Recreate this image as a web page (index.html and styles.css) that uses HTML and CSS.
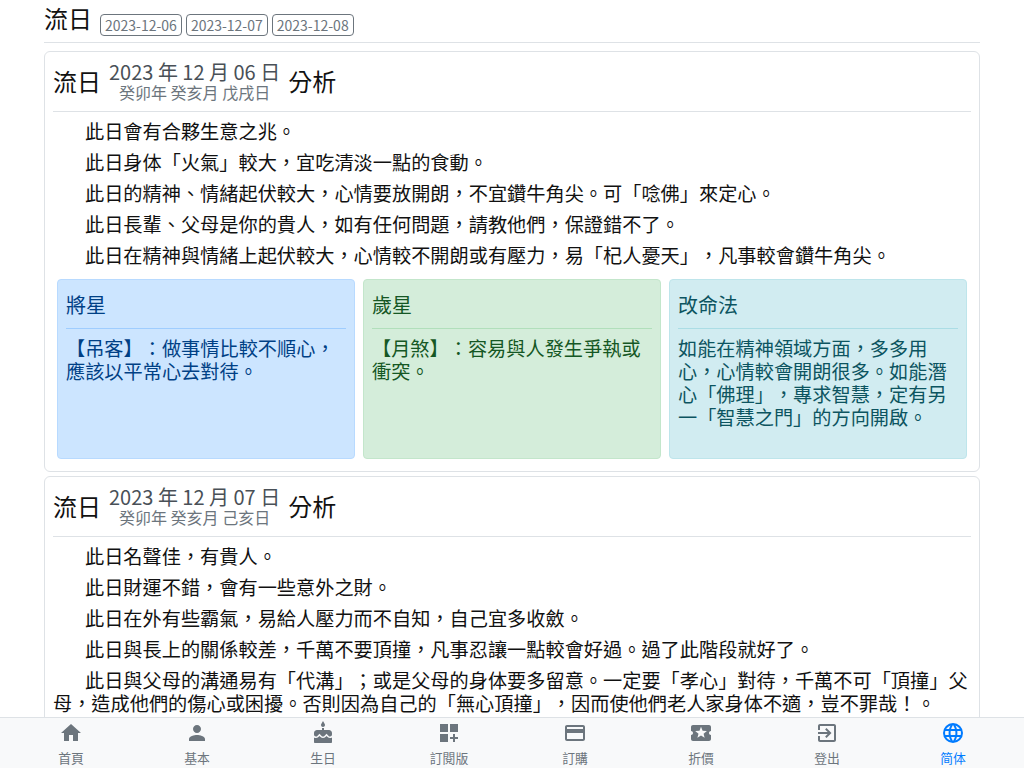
FILE: index.html
```html
<!DOCTYPE html>
<html lang="zh-Hant">
<head>
    <title>流日</title>
    <link rel="stylesheet" href="styles.css">
</head>
<body>
    <div class="top-row">
        <span class="top-title">流日</span>
        <span class="date-btn">2023-12-06</span>
        <span class="date-btn">2023-12-07</span>
        <span class="date-btn">2023-12-08</span>
    </div>
    <div class="day-card">
        <div class="day-head">
            <span class="head-word">流日</span>
            <div class="head-date"><div class="date-main">2023 年 12 月 06 日</div><div class="date-sub">癸卯年 癸亥月 戊戌日</div></div>
            <span class="head-word">分析</span>
        </div>
        <p>此日會有合夥生意之兆。</p>
        <p>此日身体「火氣」較大，宜吃清淡一點的食動。</p>
        <p>此日的精神、情緒起伏較大，心情要放開朗，不宜鑽牛角尖。可「唸佛」來定心。</p>
        <p>此日長輩、父母是你的貴人，如有任何問題，請教他們，保證錯不了。</p>
        <p>此日在精神與情緒上起伏較大，心情較不開朗或有壓力，易「杞人憂天」，凡事較會鑽牛角尖。</p>
        <div class="note-row">
            <div class="note note-blue"><div class="note-title">將星</div><div class="note-text">【吊客】：做事情比較不順心，應該以平常心去對待。</div></div>
            <div class="note note-green"><div class="note-title">歲星</div><div class="note-text">【月煞】：容易與人發生爭執或衝突。</div></div>
            <div class="note note-cyan"><div class="note-title">改命法</div><div class="note-text">如能在精神領域方面，多多用心，心情較會開朗很多。如能潛心「佛理」，專求智慧，定有另一「智慧之門」的方向開啟。</div></div>
        </div>
    </div>
    <div class="day-card">
        <div class="day-head">
            <span class="head-word">流日</span>
            <div class="head-date"><div class="date-main">2023 年 12 月 07 日</div><div class="date-sub">癸卯年 癸亥月 己亥日</div></div>
            <span class="head-word">分析</span>
        </div>
        <p>此日名聲佳，有貴人。</p>
        <p>此日財運不錯，會有一些意外之財。</p>
        <p>此日在外有些霸氣，易給人壓力而不自知，自己宜多收斂。</p>
        <p>此日與長上的關係較差，千萬不要頂撞，凡事忍讓一點較會好過。過了此階段就好了。</p>
        <p>此日與父母的溝通易有「代溝」；或是父母的身体要多留意。一定要「孝心」對待，千萬不可「頂撞」父母，造成他們的傷心或困擾。否則因為自己的「無心頂撞」，因而使他們老人家身体不適，豈不罪哉！。</p>
    </div>
    <div class="bottom-nav">
        <div class="nav-item"><svg viewBox="0 0 24 24"><path d="M10 20v-6h4v6h5v-8h3L12 3 2 12h3v8z"/></svg><span>首頁</span></div>
        <div class="nav-item"><svg viewBox="0 0 24 24"><path d="M12 12c2.200 0 4-1.800 4-4s-1.800-4-4-4-4 1.800-4 4 1.800 4 4 4zm0 2c-2.700 0-8 1.300-8 4v2h16v-2c0-2.700-5.300-4-8-4z"/></svg><span>基本</span></div>
        <div class="nav-item"><svg viewBox="0 0 24 24"><path d="M12 6c1.110 0 2-.9 2-2 0-.38-.1-.73-.29-1.030L12 0l-1.710 2.970c-.19.3-.29.65-.29 1.030 0 1.100.9 2 2 2zm4.600 9.990l-1.070-1.070-1.080 1.070c-1.300 1.300-3.580 1.310-4.890 0l-1.070-1.070-1.090 1.070C6.750 16.640 5.880 17 4.960 17c-.73 0-1.400-.23-1.960-.61V21c0 .55.45 1 1 1h16c.55 0 1-.45 1-1v-4.610c-.56.38-1.230.61-1.960.61-.92 0-1.790-.36-2.440-1.010zM18 9h-5V7h-2v2H6c-1.660 0-3 1.340-3 3v1.540c0 1.080.88 1.960 1.960 1.960.52 0 1.020-.2 1.380-.57l2.140-2.130 2.130 2.130c.74.74 2.030.74 2.770 0l2.140-2.130 2.130 2.130c.37.37.86.57 1.380.57 1.080 0 1.960-.88 1.960-1.960V12C21 10.340 19.660 9 18 9z"/></svg><span>生日</span></div>
        <div class="nav-item"><svg viewBox="0 0 24 24"><path d="M3 3h8v8H3zM13 3h8v8h-8zM3 13h8v8H3zM16 13h2v3h3v2h-3v3h-2v-3h-3v-2h3z"/></svg><span>訂閱版</span></div>
        <div class="nav-item"><svg viewBox="0 0 24 24"><path d="M20 4H4c-1.100 0-2 .9-2 2v12c0 1.100.9 2 2 2h16c1.100 0 2-.9 2-2V6c0-1.100-.9-2-2-2zm0 14H4v-6h16v6zm0-10H4V6h16v2z"/></svg><span>訂購</span></div>
        <div class="nav-item"><svg viewBox="0 0 24 24"><path d="M22 10V6c0-1.100-.9-2-2-2H4c-1.100 0-2 .9-2 2v4c1.100 0 2 .9 2 2s-.9 2-2 2v4c0 1.100.9 2 2 2h16c1.100 0 2-.9 2-2v-4c-1.100 0-2-.9-2-2s.9-2 2-2zm-6.400 6.800L12 14.500l-3.600 2.300 1.100-4.100-3.300-2.700 4.300-.3L12 5.800l1.600 3.900 4.300.3-3.300 2.700z"/></svg><span>折價</span></div>
        <div class="nav-item"><svg viewBox="0 0 24 24"><path d="M10.100 15.600 11.500 17l5-5-5-5-1.400 1.400 2.600 2.600H3v2h9.700zM19 3H5c-1.100 0-2 .9-2 2v4h2V5h14v14H5v-4H3v4c0 1.100.9 2 2 2h14c1.100 0 2-.9 2-2V5c0-1.100-.9-2-2-2z"/></svg><span>登出</span></div>
        <div class="nav-item nav-active"><svg viewBox="0 0 24 24"><path d="M12 2a10 10 0 1 0 0 20 10 10 0 0 0 0-20zm6.900 6h-3a15.600 15.600 0 0 0-1.400-3.600A8 8 0 0 1 18.900 8zM12 4c.8 1.200 1.500 2.500 1.900 4h-3.800c.4-1.500 1.100-2.800 1.900-4zM4.300 14a8 8 0 0 1 0-4h3.400a16.500 16.500 0 0 0 0 4zm.8 2h3c.3 1.300.8 2.500 1.400 3.600A8 8 0 0 1 5.100 16zm3-8h-3a8 8 0 0 1 4.400-3.600C8.900 5.500 8.400 6.700 8.100 8zM12 20c-.8-1.200-1.500-2.500-1.900-4h3.800c-.4 1.500-1.100 2.800-1.900 4zm2.300-6H9.700a14.700 14.700 0 0 1 0-4h4.600a14.700 14.700 0 0 1 0 4zm.2 5.600c.6-1.100 1.100-2.300 1.400-3.600h3a8 8 0 0 1-4.400 3.600zm1.800-5.600a16.500 16.500 0 0 0 0-4h3.400a8 8 0 0 1 0 4z"/></svg><span>简体</span></div>
    </div>
</body>
</html>
```

FILE: styles.css
```css
html, body {
    height: 768px;
    overflow: hidden;
}
body {
    margin: 0;
    padding: 0 44px;
    background-color: #fff;
    color: #111;
    font-family: "Noto Sans CJK TC", sans-serif;
    font-size: 19.200px;
    text-spacing-trim: space-all;
    font-kerning: none;
}
.top-row {
    display: flex;
    align-items: flex-end;
    gap: 4px;
    height: 43px;
    padding-bottom: 6px;
    box-sizing: border-box;
    border-bottom: 1px solid #dee2e6;
    margin-bottom: 8px;
}
.top-title {
    font-size: 24px;
    margin-right: 4px;
    line-height: 36px;
}
.date-btn {
    font-size: 14px;
    color: #6c757d;
    border: 1px solid #6c757d;
    border-radius: 4px;
    padding: 0 4px;
    line-height: 20px;
}
.day-card {
    border: 1px solid #dee2e6;
    border-radius: 6px;
    padding: 8px 8px 12px;
    margin-bottom: 4px;
}
.day-head {
    display: flex;
    align-items: center;
    gap: 8px;
    height: 52px;
    box-sizing: border-box;
    padding-bottom: 11px;
    border-bottom: 1px solid #dee2e6;
    margin-bottom: 8px;
}
.head-word {
    font-size: 24px;
}
.head-date {
    text-align: center;
}
.date-main {
    font-size: 20px;
    color: #495057;
    line-height: 24px;
}
.date-sub {
    font-size: 16px;
    color: #6c757d;
    line-height: 16px;
}
.day-card p {
    margin: 0 0 8px;
    text-indent: 32px;
    line-height: 23.040px;
}
.note-row {
    display: grid;
    grid-template-columns: repeat(3, 1fr);
    gap: 8px;
    margin-top: 12px;
    padding: 0 4px;
}
.note {
    height: 180px;
    box-sizing: border-box;
    border: 1px solid;
    border-radius: 4px;
    padding: 10px 8px;
}
.note-title {
    font-size: 20px;
    line-height: 30px;
    height: 38px;
    border-bottom: 1px solid;
    margin-bottom: 8px;
}
.note-text {
    line-height: 23.040px;
}
.note-blue { background: #cce5ff; border-color: #b8daff; color: #004085; }
.note-blue .note-title { border-color: #9fcdff; }
.note-green { background: #d4edda; border-color: #c3e6cb; color: #155724; }
.note-green .note-title { border-color: #b1dfbb; }
.note-cyan { background: #d1ecf1; border-color: #bee5eb; color: #0c5460; }
.note-cyan .note-title { border-color: #abdde5; }
.bottom-nav {
    position: fixed;
    left: 0;
    right: 0;
    bottom: 0;
    height: 51px;
    box-sizing: border-box;
    padding: 0 8px;
    display: flex;
    background: #f8f9fa;
    border-top: 1px solid #dee2e6;
}
.nav-item {
    flex: 1;
    display: flex;
    flex-direction: column;
    align-items: center;
    color: #6c757d;
    font-size: 12.800px;
    line-height: 14px;
}
.nav-item svg {
    width: 24px;
    height: 24px;
    margin-top: 3px;
    margin-bottom: 6px;
    fill: #6c757d;
}
.nav-active {
    color: #007bff;
}
.nav-active svg {
    fill: #007bff;
}
```
